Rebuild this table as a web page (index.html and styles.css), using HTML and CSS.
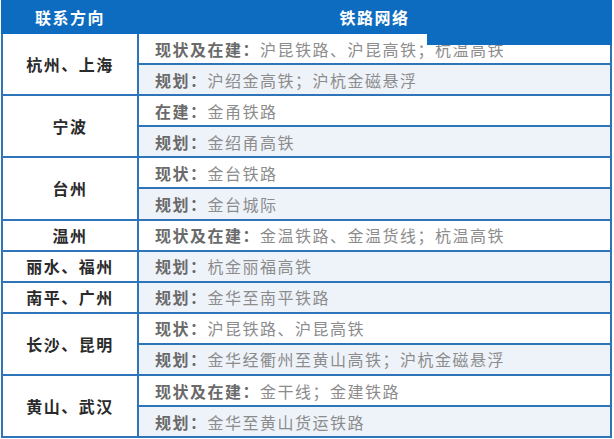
FILE: index.html
```html
<!DOCTYPE html>
<html lang="zh-CN">
<head>
<meta charset="utf-8">
<link rel="stylesheet" href="styles.css">
</head>
<body>
<div class="wrap">
<table class="net">
  <thead>
    <tr class="head"><th class="c1">联系方向</th><th class="c2">铁路网络</th></tr>
  </thead>
  <tbody>
    <tr><td class="city" rowspan="2">杭州、上海</td><td class="now"><b>现状及在建：</b>沪昆铁路、沪昆高铁；杭温高铁</td></tr>
    <tr><td class="plan"><b>规划：</b>沪绍金高铁；沪杭金磁悬浮</td></tr>
    <tr><td class="city" rowspan="2">宁波</td><td class="now"><b>在建：</b>金甬铁路</td></tr>
    <tr><td class="plan"><b>规划：</b>金绍甬高铁</td></tr>
    <tr><td class="city" rowspan="2">台州</td><td class="now"><b>现状：</b>金台铁路</td></tr>
    <tr><td class="plan"><b>规划：</b>金台城际</td></tr>
    <tr><td class="city">温州</td><td class="now"><b>现状及在建：</b>金温铁路、金温货线；杭温高铁</td></tr>
    <tr><td class="city">丽水、福州</td><td class="plan"><b>规划：</b>杭金丽福高铁</td></tr>
    <tr><td class="city">南平、广州</td><td class="plan"><b>规划：</b>金华至南平铁路</td></tr>
    <tr><td class="city" rowspan="2">长沙、昆明</td><td class="now"><b>现状：</b>沪昆铁路、沪昆高铁</td></tr>
    <tr><td class="plan"><b>规划：</b>金华经衢州至黄山高铁；沪杭金磁悬浮</td></tr>
    <tr><td class="city" rowspan="2">黄山、武汉</td><td class="now"><b>现状及在建：</b>金干线；金建铁路</td></tr>
    <tr><td class="plan"><b>规划：</b>金华至黄山货运铁路</td></tr>
  </tbody>
</table>
<div class="cover"></div>
</div>
</body>
</html>
```
FILE: styles.css
```css
html, body {
  margin: 0;
  padding: 0;
  background: #ffffff;
}
body {
  font-family: "Noto Sans CJK SC", "Noto Sans", sans-serif;
}
.wrap {
  position: relative;
  width: 614px;
  height: 439px;
  padding: 0 2px 0 1px;
  box-sizing: border-box;
}
.net {
  width: 611px;
  border-collapse: collapse;
  table-layout: fixed;
}
.net th, .net td {
  border: 2px solid #2d74b8;
  padding: 0;
  line-height: 20px;
  letter-spacing: 1.5px;
}
.head {
  height: 32px;
}
.head th {
  background: #0d6cbf;
  color: #ffffff;
  font-size: 16px;
  font-weight: 700;
  text-align: center;
  border-color: #0d6cbf;
}
.c1 { width: 134px; }
.net tbody tr {
  height: 31.1px;
}
.city {
  background: #ffffff;
  color: #2a2a2a;
  font-size: 16px;
  font-weight: 700;
  text-align: center;
  border-right-color: #1f7fd3;
}
.now, .plan {
  font-size: 16px;
  color: #8c8c8c;
  padding-left: 16px !important;
  text-align: left;
}
.now { background: #ffffff; }
.plan { background: #eef3fa; }
.now b, .plan b {
  color: #6a6a6a;
  font-weight: 700;
}
.cover {
  position: absolute;
  left: 427px;
  top: 31px;
  width: 185px;
  height: 14px;
  background: #0d6cbf;
}
```
